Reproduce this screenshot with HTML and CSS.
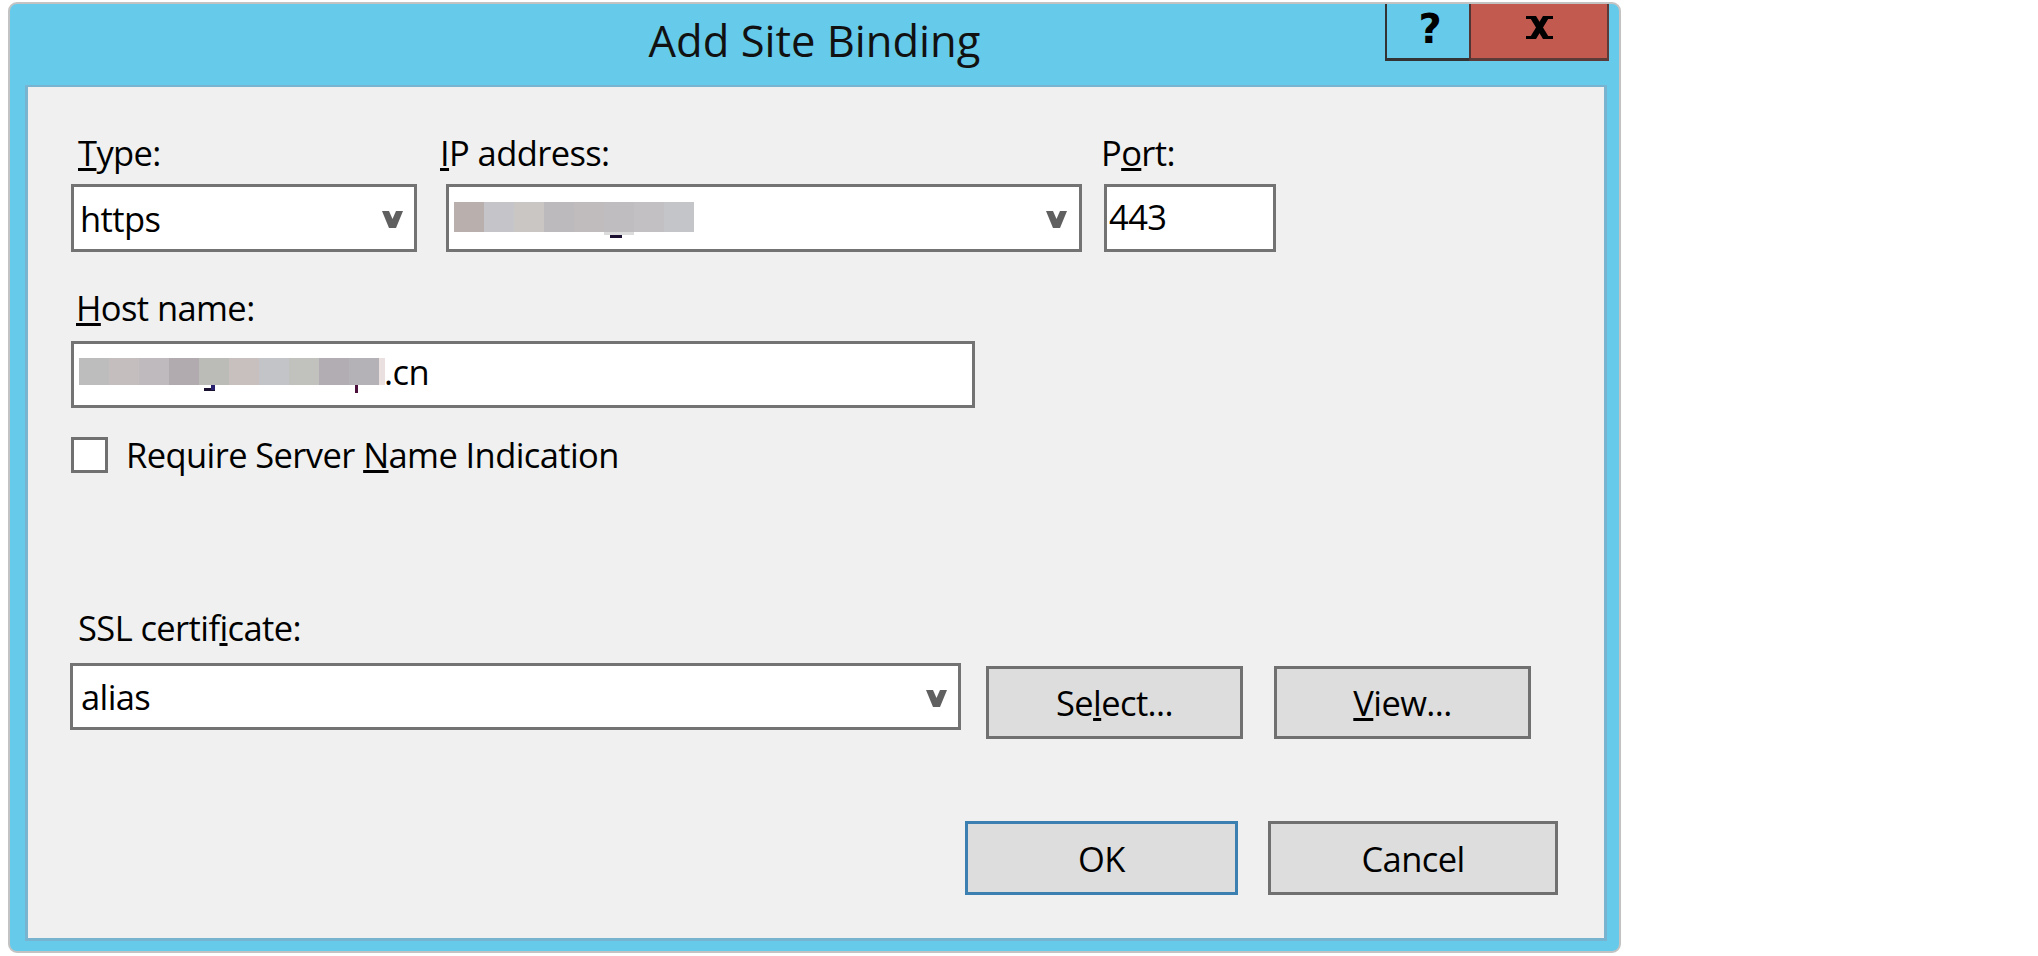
FILE: index.html
```html
<!DOCTYPE html>
<html lang="en">
<head>
<meta charset="utf-8">
<title>Add Site Binding</title>
<link rel="stylesheet" href="styles.css">
</head>
<body>
<div class="window">
  <div class="titlebar">
    <div class="title">Add Site Binding</div>
    <div class="caption-btns">
      <div class="cap-btn help">?</div>
      <div class="cap-btn close">
        <svg class="close-x" width="27" height="23" viewBox="0 0 27 23">
          <polygon points="3,0 10,0 24,23 17,23"/>
          <polygon points="17,0 24,0 10,23 3,23"/>
          <rect x="0" y="0" width="10" height="3"/>
          <rect x="17" y="0" width="10" height="3"/>
          <rect x="0" y="20" width="10" height="3"/>
          <rect x="17" y="20" width="10" height="3"/>
        </svg>
      </div>
    </div>
  </div>

  <div class="client">
    <div class="row-top">
      <div class="field f-type">
        <div class="lbl lbl-type"><u>T</u>ype:</div>
        <div class="box combo combo-type">
          <span class="val">https</span>
          <svg class="chev" width="21" height="17" viewBox="0 0 21 17"><polygon points="0,0 7,0 10.5,8 14,0 21,0 14,17 7,17"/></svg>
        </div>
      </div>
      <div class="field f-ip">
        <div class="lbl lbl-ip"><u>I</u>P address:</div>
        <div class="box combo combo-ip">
          <div class="mosaic mosaic-ip">
            <span></span><span></span><span></span><span></span><span></span><span></span><span></span><span></span>
            <i class="desc-ip-light"></i><i class="desc-ip-dark"></i>
          </div>
          <svg class="chev" width="21" height="17" viewBox="0 0 21 17"><polygon points="0,0 7,0 10.5,8 14,0 21,0 14,17 7,17"/></svg>
        </div>
      </div>
      <div class="field f-port">
        <div class="lbl lbl-port">P<u>o</u>rt:</div>
        <div class="box textbox port-box"><span class="val">443</span></div>
      </div>
    </div>

    <div class="field f-host">
      <div class="lbl lbl-host"><u>H</u>ost name:</div>
      <div class="box textbox host-box">
        <div class="mosaic mosaic-host">
          <span></span><span></span><span></span><span></span><span></span><span></span><span></span><span></span><span></span><span></span><span class="thin"></span>
          <i class="desc-g"></i><i class="desc-g2"></i><i class="desc-p"></i>
        </div>
        <span class="val host-val">.cn</span>
      </div>
    </div>

    <div class="check-row">
      <div class="checkbox"></div>
      <div class="check-lbl">Require Server <u>N</u>ame Indication</div>
    </div>

    <div class="field f-ssl">
      <div class="lbl lbl-ssl">SSL certif<u>i</u>cate:</div>
      <div class="ssl-row">
        <div class="box combo combo-ssl">
          <span class="val">alias</span>
          <svg class="chev" width="21" height="17" viewBox="0 0 21 17"><polygon points="0,0 7,0 10.5,8 14,0 21,0 14,17 7,17"/></svg>
        </div>
        <div class="btn btn-select">Se<u>l</u>ect...</div>
        <div class="btn btn-view"><u>V</u>iew...</div>
      </div>
    </div>

    <div class="actions">
      <div class="btn btn-ok">OK</div>
      <div class="btn btn-cancel">Cancel</div>
    </div>
  </div>
</div>
</body>
</html>
```

FILE: styles.css
```css
* {
  box-sizing: border-box;
}

body {
  margin: 0;
  background: #ffffff;
  font-family: "Open Sans", "Noto Sans", sans-serif;
  color: #000;
}

u {
  text-decoration-thickness: 3px;
  text-underline-offset: 2px;
}

.window {
  margin: 2px 0 0 8px;
  width: 1613px;
  height: 951px;
  border: 2px solid #c3c3c3;
  border-radius: 9px;
  background: #66caea;
  display: flex;
  flex-direction: column;
  padding: 0 12px 10px 15px;
}

/* ---------- title bar ---------- */
.titlebar {
  height: 81px;
  flex: none;
  margin: 0 -12px 0 -15px;
  display: grid;
  grid-template-columns: 1fr auto 1fr;
  align-items: start;
}

.title {
  grid-column: 2;
  font-size: 43.5px;
  line-height: 59px;
  margin-top: 7px;
  color: #111;
  white-space: nowrap;
}

.caption-btns {
  grid-column: 3;
  justify-self: end;
  display: flex;
  height: 57px;
  margin-right: 10px;
}

.cap-btn {
  height: 57px;
  display: flex;
  align-items: center;
  justify-content: center;
}

.help {
  width: 84px;
  border-left: 2px solid #333333;
  border-bottom: 3px solid #333333;
  font-family: "DejaVu Sans", sans-serif;
  font-weight: bold;
  font-size: 40px;
  line-height: 54px;
  padding: 0 0 4px 4px;
  color: #000;
}

.close {
  width: 140px;
  background: #c25a50;
  border-left: 2px solid #4f3634;
  border-right: 2px solid #5b3a38;
  border-bottom: 3px solid #5b3a38;
  padding-bottom: 7px;
}

.close-x {
  fill: #000;
  display: block;
}

/* ---------- client area ---------- */
.client {
  flex: 1;
  background: #f0f0f0;
  border: 3px solid #78b4cf;
  border-top-width: 2px;
  padding: 46px 0 0 43px;
  display: flex;
  flex-direction: column;
  align-items: flex-start;
}

.lbl,
.check-lbl,
.val,
.btn {
  font-size: 34.5px;
  letter-spacing: -0.6px;
  white-space: nowrap;
}

.lbl {
  line-height: 40px;
}

.box {
  background: #ffffff;
  border: 3px solid #737373;
  display: flex;
  align-items: center;
}

.val {
  line-height: 61px;
}

.chev {
  fill: #606060;
  margin-left: auto;
  margin-top: 3px;
  flex: none;
  display: block;
}

.combo {
  padding: 0 11px 0 6px;
}

/* row 1 */
.row-top {
  display: flex;
}

.field {
  display: flex;
  flex-direction: column;
  align-items: flex-start;
}

.f-type {
  width: 346px;
}

.f-ip {
  width: 636px;
  margin-left: 29px;
}

.f-port {
  width: 172px;
  margin-left: 22px;
}

.row-top .box {
  width: 100%;
  height: 68px;
  margin-top: 11px;
}

.lbl-type {
  margin-left: 7px;
}

.lbl-ip {
  margin-left: -6px;
}

.lbl-port {
  margin-left: -3px;
}

.combo-ip {
  padding-left: 5px;
  padding-right: 12px;
}

.port-box {
  padding-left: 2px;
}

.port-box .val {
  margin-top: -3px;
}

/* mosaic (pixelated/redacted text) */
.mosaic {
  display: flex;
  position: relative;
  flex: none;
}

.mosaic span {
  width: 30px;
  display: block;
}

.mosaic-ip {
  height: 30px;
  align-self: flex-start;
  margin-top: 15px;
}

.mosaic-ip span:nth-child(1) { background: #b9afac; }
.mosaic-ip span:nth-child(2) { background: #c4c4c9; }
.mosaic-ip span:nth-child(3) { background: #cac6c4; }
.mosaic-ip span:nth-child(4) { background: #bdbabd; }
.mosaic-ip span:nth-child(5) { background: #c0bbbc; }
.mosaic-ip span:nth-child(6) { background: #c0bdc0; }
.mosaic-ip span:nth-child(7) { background: #c2c0c3; }
.mosaic-ip span:nth-child(8) { background: #c4c5c8; }

.desc-ip-light {
  position: absolute;
  left: 150px;
  top: 30px;
  width: 30px;
  height: 3px;
  background: #dcdcdc;
}

.desc-ip-dark {
  position: absolute;
  left: 156px;
  top: 33px;
  width: 12px;
  height: 3px;
  background: #1b1030;
}

/* host name */
.f-host {
  margin-top: 36px;
}

.lbl-host {
  margin-left: 5px;
}

.host-box {
  width: 904px;
  height: 67px;
  margin-top: 13px;
  padding-left: 5px;
  align-items: flex-start;
}

.mosaic-host {
  height: 27px;
  margin-top: 14px;
}

.mosaic-host span:nth-child(1) { background: #bdbdbd; }
.mosaic-host span:nth-child(2) { background: #c5bebe; }
.mosaic-host span:nth-child(3) { background: #bfbabe; }
.mosaic-host span:nth-child(4) { background: #b1abaf; }
.mosaic-host span:nth-child(5) { background: #bbbbb8; }
.mosaic-host span:nth-child(6) { background: #c8bfbf; }
.mosaic-host span:nth-child(7) { background: #c3c4c7; }
.mosaic-host span:nth-child(8) { background: #c1c2be; }
.mosaic-host span:nth-child(9) { background: #b2adb3; }
.mosaic-host span:nth-child(10) { background: #b4b2b6; }
.mosaic-host span.thin { width: 6px; background: #ebe0e0; }

.desc-g {
  position: absolute;
  left: 125px;
  top: 30px;
  width: 11px;
  height: 3px;
  background: #1a1030;
}

.desc-g2 {
  position: absolute;
  left: 132px;
  top: 27px;
  width: 4px;
  height: 5px;
  background: #2a2070;
}

.desc-p {
  position: absolute;
  left: 276px;
  top: 27px;
  width: 3px;
  height: 8px;
  background: #4a0f3a;
}

.host-val {
  line-height: 47px;
  margin-top: 4px;
  margin-left: -1px;
}

/* checkbox */
.check-row {
  display: flex;
  align-items: center;
  height: 40px;
  margin-top: 27px;
}

.checkbox {
  width: 37px;
  height: 36px;
  background: #ffffff;
  border: 3px solid #707070;
}

.check-lbl {
  line-height: 40px;
  margin-left: 18px;
}

/* ssl */
.f-ssl {
  margin-top: 133px;
}

.lbl-ssl {
  margin-left: 7px;
}

.ssl-row {
  display: flex;
  align-items: flex-start;
  margin-top: 15px;
  margin-left: -1px;
}

.combo-ssl {
  width: 891px;
  height: 67px;
  padding-left: 8px;
}

.btn {
  background: #dddddd;
  border: 3px solid #707070;
  display: flex;
  align-items: center;
  justify-content: center;
  line-height: 47px;
  flex: none;
}

.btn-select {
  width: 257px;
  height: 73px;
  margin-left: 25px;
  margin-top: 3px;
}

.btn-view {
  width: 257px;
  height: 73px;
  margin-left: 31px;
  margin-top: 3px;
}

/* actions */
.actions {
  display: flex;
  margin-top: 82px;
  margin-left: 894px;
}

.btn-ok {
  width: 273px;
  height: 74px;
  border-color: #3c7fb1;
}

.btn-cancel {
  width: 290px;
  height: 74px;
  margin-left: 30px;
}
```
